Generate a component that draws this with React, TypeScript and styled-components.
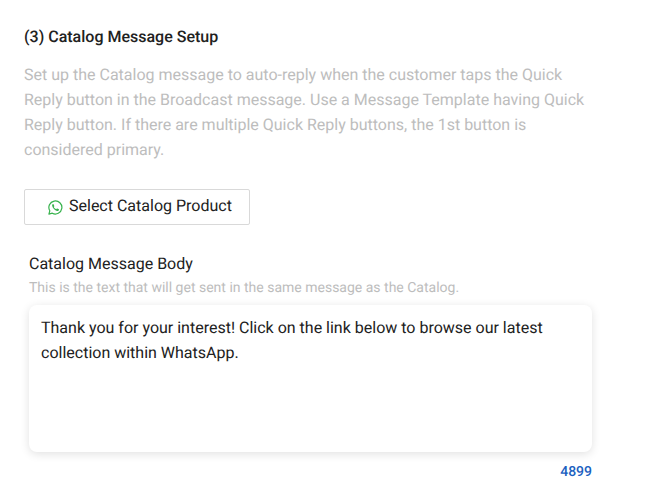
import React, { useId, useState } from "react";
import styled, { createGlobalStyle } from "styled-components";

const GlobalStyle = createGlobalStyle`
  *, *::before, *::after { box-sizing: border-box; }
  body {
    margin: 0;
    background: #fff;
    color: #212121;
    font-family: Roboto, "Liberation Sans", sans-serif;
    text-rendering: geometricPrecision;
  }
`;

const Section = styled.main`
  padding: 25px 76px 16px 24px;
`;

const Title = styled.h2`
  margin: 0 0 13px;
  font-size: 16px;
  font-weight: 500;
  line-height: 24px;
`;

const Description = styled.p`
  margin: 0 0 27px;
  color: #bdbdbd;
  font-size: 16px;
  line-height: 25px;
`;

const SelectButton = styled.button`
  display: flex;
  align-items: center;
  gap: 6px;
  height: 36px;
  padding: 0 17px 2px 23px;
  border: 1px solid #d9d9d9;
  border-radius: 2px;
  background: #fff;
  color: #212121;
  font: 400 16px/24px Roboto, "Liberation Sans", sans-serif;
  text-rendering: inherit;
  cursor: pointer;
`;

const ChatIcon = styled.svg`
  width: 15px;
  height: 15px;
  margin-top: 2px;
  color: #37b24d;
`;

const Field = styled.div`
  display: flex;
  flex-direction: column;
  margin-top: 27px;
  padding-left: 5px;
`;

const Label = styled.label`
  font-size: 16px;
  line-height: 24px;
`;

const Hint = styled.p`
  margin: 0 0 5px;
  color: #bdbdbd;
  font-size: 14px;
  line-height: 24px;
`;

const MessageBox = styled.textarea`
  width: 100%;
  height: 147px;
  padding: 10px 12px;
  border: 0;
  border-radius: 8px;
  outline: 0;
  resize: none;
  background: #fff;
  box-shadow: 0 2px 10px rgba(0, 0, 0, 0.12);
  color: #212121;
  font: 400 16px/25px Roboto, "Liberation Sans", sans-serif;
  text-rendering: inherit;
`;

const Counter = styled.output`
  align-self: flex-end;
  margin-top: 8px;
  color: #1a5fc0;
  font-size: 14px;
  font-weight: 500;
  line-height: 24px;
`;

const CHARACTER_LIMIT = 5000;
const INITIAL_MESSAGE =
  "Thank you for your interest! Click on the link below to browse our latest collection within WhatsApp.";

function WhatsAppIcon() {
  return (
    <ChatIcon viewBox="0 0 15 15" fill="none" aria-hidden="true">
      <path
        d="M0.9 14.1 1.8 10.8A6.5 6.5 0 1 1 4.3 13.2Z"
        stroke="currentColor"
        strokeWidth="1.2"
        strokeLinejoin="round"
      />
      <path
        d="M5 4C4.3 4.4 4 5.1 4.2 6 4.6 8 6.8 10.5 9 10.9 10 11.1 10.8 10.6 11 9.7L10.9 9.2 9.3 8.4 8.9 8.5 8.2 9.2C7.1 8.8 6.2 7.9 5.8 7L6.3 6.3 6.3 5.9 5.6 4.2Z"
        fill="currentColor"
      />
    </ChatIcon>
  );
}

export default function App() {
  const id = useId();
  const [message, setMessage] = useState(INITIAL_MESSAGE);
  return (
    <>
      <GlobalStyle />
      <Section>
        <Title>(3) Catalog Message Setup</Title>
        <Description>
          Set up the Catalog message to auto-reply when the customer taps the Quick Reply button in
          the Broadcast message. Use a Message Template having Quick Reply button. If there are
          multiple Quick Reply buttons, the 1st button is considered primary.
        </Description>
        <SelectButton type="button">
          <WhatsAppIcon />
          Select Catalog Product
        </SelectButton>
        <Field>
          <Label htmlFor={id}>Catalog Message Body</Label>
          <Hint id={`${id}-hint`}>This is the text that will get sent in the same message as the Catalog.</Hint>
          <MessageBox
            id={id}
            aria-describedby={`${id}-hint`}
            maxLength={CHARACTER_LIMIT}
            spellCheck={false}
            value={message}
            onChange={(event) => setMessage(event.target.value)}
          />
          <Counter htmlFor={id}>{CHARACTER_LIMIT - message.length}</Counter>
        </Field>
      </Section>
    </>
  );
}
